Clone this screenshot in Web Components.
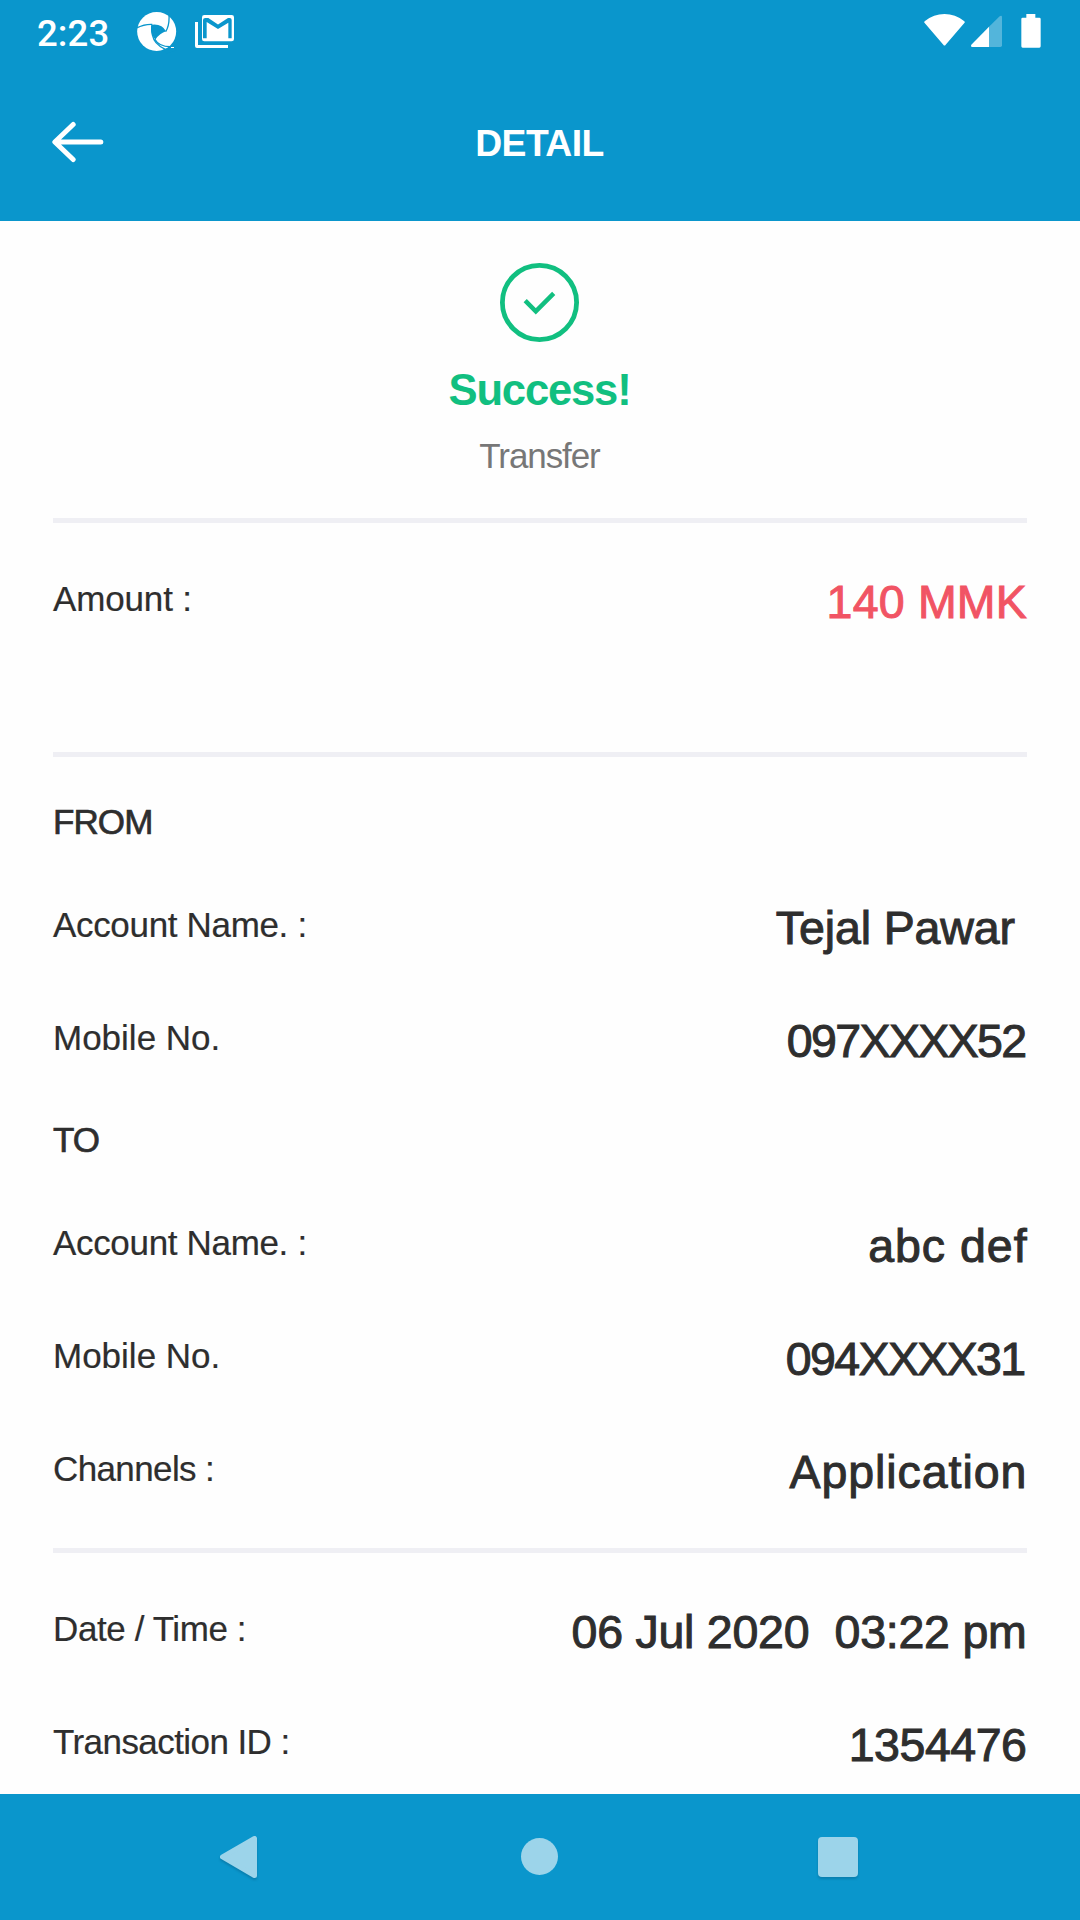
<!DOCTYPE html>
<html lang="en">
<head>
<meta charset="utf-8">
<title>Detail</title>
<style>
  html, body { margin: 0; height: 100%; }
  body { background: #fefefe; overflow: hidden; font-family: "Liberation Sans", Arial, sans-serif; }
</style>
</head>
<body>
<receipt-screen>
  <status-bar slot="top" time="2:23"></status-bar>
  <app-header slot="top">DETAIL</app-header>

  <status-hero kind="Transfer">Success!</status-hero>
  <rule-line></rule-line>
  <detail-group style="--top:52px;--bottom:123px">
    <detail-row label="Amount :" style="--v:#f15464;--vs:.2px;--ls:-.15px">140 MMK</detail-row>
  </detail-group>
  <rule-line></rule-line>
  <section-title style="--top:42px;--track:-.9px">FROM</section-title>
  <detail-group style="--top:56px">
    <detail-row label="Account Name. :" style="--vs:-.1px;--ls:-.33px;--end:12px">Tejal Pawar</detail-row>
    <detail-row label="Mobile No." style="--vs:-1.63px;--ls:0px;--end:1.5px">097XXXX52</detail-row>
  </detail-group>
  <section-title style="--top:49px;--track:-1px">TO</section-title>
  <detail-group style="--top:56px;--bottom:49px">
    <detail-row label="Account Name. :" style="--vs:.98px;--ls:-.33px;--end:-.6px">abc def</detail-row>
    <detail-row label="Mobile No." style="--vs:-1.63px;--ls:0px;--end:2.5px">094XXXX31</detail-row>
    <detail-row label="Channels :" style="--vs:.95px;--ls:-.62px;--end:-.4px">Application</detail-row>
  </detail-group>
  <rule-line></rule-line>
  <detail-group style="--top:52px">
    <detail-row label="Date / Time :" style="--vs:-.25px;--ls:-.4px;--end:.5px">06 Jul 2020  03:22 pm</detail-row>
    <detail-row label="Transaction ID :" style="--vs:-.46px;--ls:-.57px;--end:.5px">1354476</detail-row>
  </detail-group>

  <nav-bar slot="bottom"></nav-bar>
</receipt-screen>

<script>
const define = (name, html) => customElements.define(name, class extends HTMLElement {
  connectedCallback() {
    if (this.shadowRoot) return;
    const t = document.createElement('template');
    t.innerHTML = typeof html === 'function' ? html(this) : html;
    this.attachShadow({ mode: 'open' }).append(t.content.cloneNode(true));
  }
});

define('receipt-screen', `
  <style>
    :host { display: flex; flex-direction: column; width: 1080px; height: 1920px; overflow: hidden; --brand: #0a96cc; }
    header, footer { flex: none; background: var(--brand); }
    main { flex: 1; min-height: 0; overflow: hidden; padding: 0 53px; }
  </style>
  <header><slot name="top"></slot></header>
  <main><slot></slot></main>
  <footer><slot name="bottom"></slot></footer>`);

define('status-bar', el => `
  <style>
    :host { display: flex; height: 63px; padding: 0 39px 0 37px; align-items: flex-start; color: #fff; }
    time { font: 500 36.5px/67px Roboto, sans-serif; width: 72px; letter-spacing: .1px; }
    svg { display: block; fill: #fff; flex: none; }
    .app { margin-left: 28px; }
    .mail { margin-left: 18px; }
    .wifi { margin-left: auto; }
    .cell { margin-left: 6px; }
    .batt { margin-left: 19px; }
    .cut { fill: none; stroke: #0a96cc; }
  </style>
  <time>${el.getAttribute('time')}</time>
  <svg class="app" width="40" height="63" viewBox="411 0 120 189">
    <circle cx="470" cy="94.500" r="58.500"/>
    <path fill="#0a96cc" d="M455 74Q486 70 498 94Q480 99 466 119Q449 99 455 74Z"/>
    <path class="cut" stroke-width="4" d="M410 84Q432 72 457 73M507 44Q509 76 497 95M464 117Q478 143 520 140"/>
    <path class="cut" stroke-width="4" d="M455 76Q453 110 468 128Q478 140 496 148"/>
    <path fill="#0a96cc" d="M488 149Q504 146 514 137L534 150L500 160Z"/>
    <path d="M513 141h9v3h-9z"/>
  </svg>
  <svg class="mail" width="39" height="63" viewBox="585 0 117 189">
    <path d="M585 66h9v69h90v9h-93q-6 0-6-6z"/>
    <rect x="606" y="45" width="96" height="79" rx="7"/>
    <path fill="#0a96cc" d="M609 115V60Q609 54 616 54H625L654 73.500L684 54H689Q695 54 695 60V115H685V68L654 87L620 66V115Z"/>
  </svg>
  <svg class="wifi" width="41" height="63" viewBox="72 0 123 189">
    <path d="M75 63Q101 42 133.500 42Q166 42 192 63Q196 66 193 69L137 134Q133.500 139 130 134L74 69Q71 66 75 63Z"/>
  </svg>
  <svg class="cell" width="31" height="63" viewBox="213 0 93 189">
    <path opacity=".3" d="M267 80L299 49Q306 45 306 52V136Q306 141 301 141H267Z"/>
    <path d="M267 80V141H217Q211 141 214 134Z"/>
  </svg>
  <svg class="batt" width="20" height="63" viewBox="365 0 60 189">
    <path d="M381 42h27v11h12q4 0 4 4v82q0 4-4 4h-50q-4 0-4-4v-82q0-4 4-4h11z"/>
  </svg>`);

define('app-header', `
  <style>
    :host { display: grid; grid-template-columns: 1fr auto 1fr; align-items: center; height: 158px; padding: 0 53px 0 52px; color: #fff; }
    svg { display: block; }
    h1 { margin: 1px 0 0; font-size: 37.300px; line-height: 46px; font-weight: 700; letter-spacing: -.56px; }
  </style>
  <svg width="53" height="42" viewBox="155 363 159 126" fill="none" stroke="#fff" stroke-width="15" stroke-linecap="round" stroke-linejoin="round">
    <path d="M166 426H301.500M218.500 373.500L163.500 426L218.500 478.500"/>
  </svg>
  <h1><slot></slot></h1>`);

define('status-hero', el => `
  <style>
    :host { display: flex; flex-direction: column; align-items: center; height: 297px; box-sizing: border-box; padding: 42px 1px 0 0; }
    svg { display: block; }
    strong { margin-top: 21px; font-size: 43.600px; line-height: 54px; letter-spacing: -1.180px; color: #11bf80; }
    span { margin-top: 16px; font-size: 35px; line-height: 46px; letter-spacing: -1.080px; color: #777; }
  </style>
  <svg width="79" height="79" viewBox="0 0 79 79" fill="none" stroke="#11bf80">
    <circle cx="39.500" cy="39.500" r="37.100" stroke-width="4.800"/>
    <path d="M25.200 37.700L35.800 48.300L53.700 30.400" stroke-width="4.500"/>
  </svg>
  <strong><slot></slot></strong>
  <span>${el.getAttribute('kind')}</span>`);

define('rule-line', `<style>:host { display: block; height: 5px; background: #efeff4; }</style>`);

define('section-title', `
  <style>
    :host { display: block; padding-top: var(--top); font-size: 35px; line-height: 46px; letter-spacing: var(--track);
            color: #2e2e2e; -webkit-text-stroke: .7px #2e2e2e; }
  </style><slot></slot>`);

define('detail-group', `
  <style>
    :host { display: flex; flex-direction: column; gap: 59px; padding: var(--top, 0) 0 var(--bottom, 0); }
  </style><slot></slot>`);

define('detail-row', el => `
  <style>
    :host { display: flex; justify-content: space-between; align-items: flex-start; height: 54px; color: #2e2e2e; white-space: pre; }
    label { font-size: 35px; line-height: 47px; letter-spacing: var(--ls, 0); -webkit-text-stroke: .2px #2e2e2e; }
    output { font-size: 46.500px; line-height: 54px; letter-spacing: var(--vs, 0); margin-right: var(--end, 0);
             color: var(--v, #2e2e2e); -webkit-text-stroke: 1px var(--v, #2e2e2e); }
  </style>
  <label>${el.getAttribute('label')}</label><output><slot></slot></output>`);

define('nav-bar', `
  <style>
    :host { display: grid; grid-template-columns: 1fr 1fr 1fr; height: 126px; padding: 0 91px 0 89px; justify-items: center; }
    svg { display: block; fill: #9cd4ea; filter: drop-shadow(0 2px 1px rgba(0,40,70,.22)); }
  </style>
  <svg width="44" height="126" viewBox="217 1794 44 126"><path d="M222.500 1856.800L254.500 1838.500V1875.500Z" stroke="#9cd4ea" stroke-width="5" stroke-linejoin="round"/></svg>
  <svg width="44" height="126" viewBox="517 1794 44 126" style="filter:none"><circle cx="539.500" cy="1856.500" r="18.500"/></svg>
  <svg width="44" height="126" viewBox="817 1794 44 126"><rect x="818" y="1837" width="40" height="40" rx="4"/></svg>`);
</script>
</body>
</html>
